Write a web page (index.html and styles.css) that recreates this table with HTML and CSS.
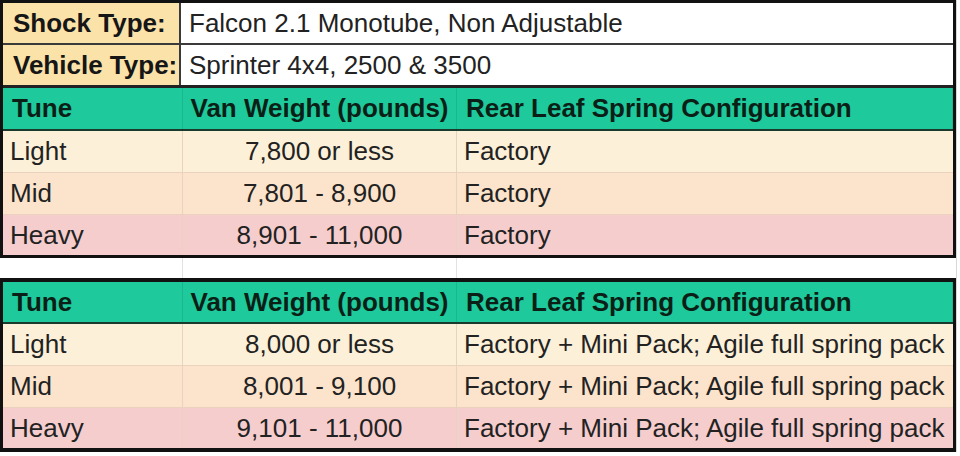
FILE: index.html
```html
<!DOCTYPE html>
<html>
<head>
<meta charset="utf-8">
<link rel="stylesheet" href="styles.css">
</head>
<body>
<div class="page">
  <div class="sheet first">
    <div class="info">
      <div class="label">Shock Type:</div>
      <div class="value">Falcon 2.1 Monotube, Non Adjustable</div>
    </div>
    <div class="info last">
      <div class="label">Vehicle Type:</div>
      <div class="value">Sprinter 4x4, 2500 &amp; 3500</div>
    </div>
    <div class="row head">
      <div class="cell">Tune</div>
      <div class="cell center">Van Weight (pounds)</div>
      <div class="cell">Rear Leaf Spring Configuration</div>
    </div>
    <div class="row light">
      <div class="cell">Light</div>
      <div class="cell center">7,800 or less</div>
      <div class="cell">Factory</div>
    </div>
    <div class="row mid">
      <div class="cell">Mid</div>
      <div class="cell center">7,801 - 8,900</div>
      <div class="cell">Factory</div>
    </div>
    <div class="row heavy">
      <div class="cell">Heavy</div>
      <div class="cell center">8,901 - 11,000</div>
      <div class="cell">Factory</div>
    </div>
  </div>
  <div class="gap">
    <div class="gcell"></div>
    <div class="gcell"></div>
    <div class="gcell"></div>
  </div>
  <div class="sheet second">
    <div class="row head">
      <div class="cell">Tune</div>
      <div class="cell center">Van Weight (pounds)</div>
      <div class="cell">Rear Leaf Spring Configuration</div>
    </div>
    <div class="row light">
      <div class="cell">Light</div>
      <div class="cell center">8,000 or less</div>
      <div class="cell">Factory + Mini Pack; Agile full spring pack</div>
    </div>
    <div class="row mid">
      <div class="cell">Mid</div>
      <div class="cell center">8,001 - 9,100</div>
      <div class="cell">Factory + Mini Pack; Agile full spring pack</div>
    </div>
    <div class="row heavy">
      <div class="cell">Heavy</div>
      <div class="cell center">9,101 - 11,000</div>
      <div class="cell">Factory + Mini Pack; Agile full spring pack</div>
    </div>
  </div>
</div>
</body>
</html>
```

FILE: styles.css
```css
* { box-sizing: border-box; }
html, body { margin: 0; padding: 0; }
body {
  background: #ffffff;
  width: 960px;
  height: 456px;
  overflow: hidden;
  font-family: "Liberation Sans", Arial, sans-serif;
  font-size: 26px;
  color: #222222;
}
.page {
  width: 957px;
  display: flex;
  flex-direction: column;
  border-right: 1px solid #d8d8d8;
}
.sheet {
  border: 3px solid #111;
  display: flex;
  flex-direction: column;
}
.sheet.second {
  border-width: 4px 3px 4px 3px;
}
.info {
  display: grid;
  grid-template-columns: 178px 1fr;
  height: 42px;
  border-bottom: 2px solid #3a3a3a;
}
.info.last {
  height: 43px;
  border-bottom: 3px solid #222;
}
.label {
  background: #fbe2a9;
  font-weight: bold;
  color: #161616;
  padding-left: 10px;
  line-height: 40px;
  border-right: 2px solid #3a3a3a;
  white-space: nowrap;
}
.value {
  background: #ffffff;
  padding-left: 8px;
  line-height: 40px;
  white-space: nowrap;
}
.row {
  display: grid;
  grid-template-columns: 180px 274px 1fr;
  height: 42px;
  border-bottom: 1px solid #ead2bf;
}
.row .cell {
  padding-left: 7px;
  line-height: 41px;
  white-space: nowrap;
  border-right: 1px solid #e6d4c0;
}
.row .cell:last-child { border-right: none; }
.row .cell.center { text-align: center; padding-left: 0; }
.row.head {
  background: #1ec99b;
  font-weight: bold;
  color: #0b1f17;
  height: 43px;
  border-bottom: 2px solid #1b3a2e;
}
.row.head .cell {
  padding-left: 9px;
  line-height: 41px;
  border-right: 1px solid #1ab78d;
}
.row.head .cell.center { padding-left: 0; }
.second .row.head { height: 42px; }
.second .row.head .cell { line-height: 40px; }
.row.light { background: #fdf0d8; }
.row.mid { background: #fce4cc; }
.row.heavy { background: #f5cdcd; border-bottom: none; height: 40px; }
.row.heavy .cell { line-height: 40px; }
.gap {
  display: grid;
  grid-template-columns: 183px 274px 1fr;
  height: 20px;
  background: #ffffff;
}
.gcell { border-right: 1px solid #e2e2e2; }
.gcell:last-child { border-right: none; }
```
